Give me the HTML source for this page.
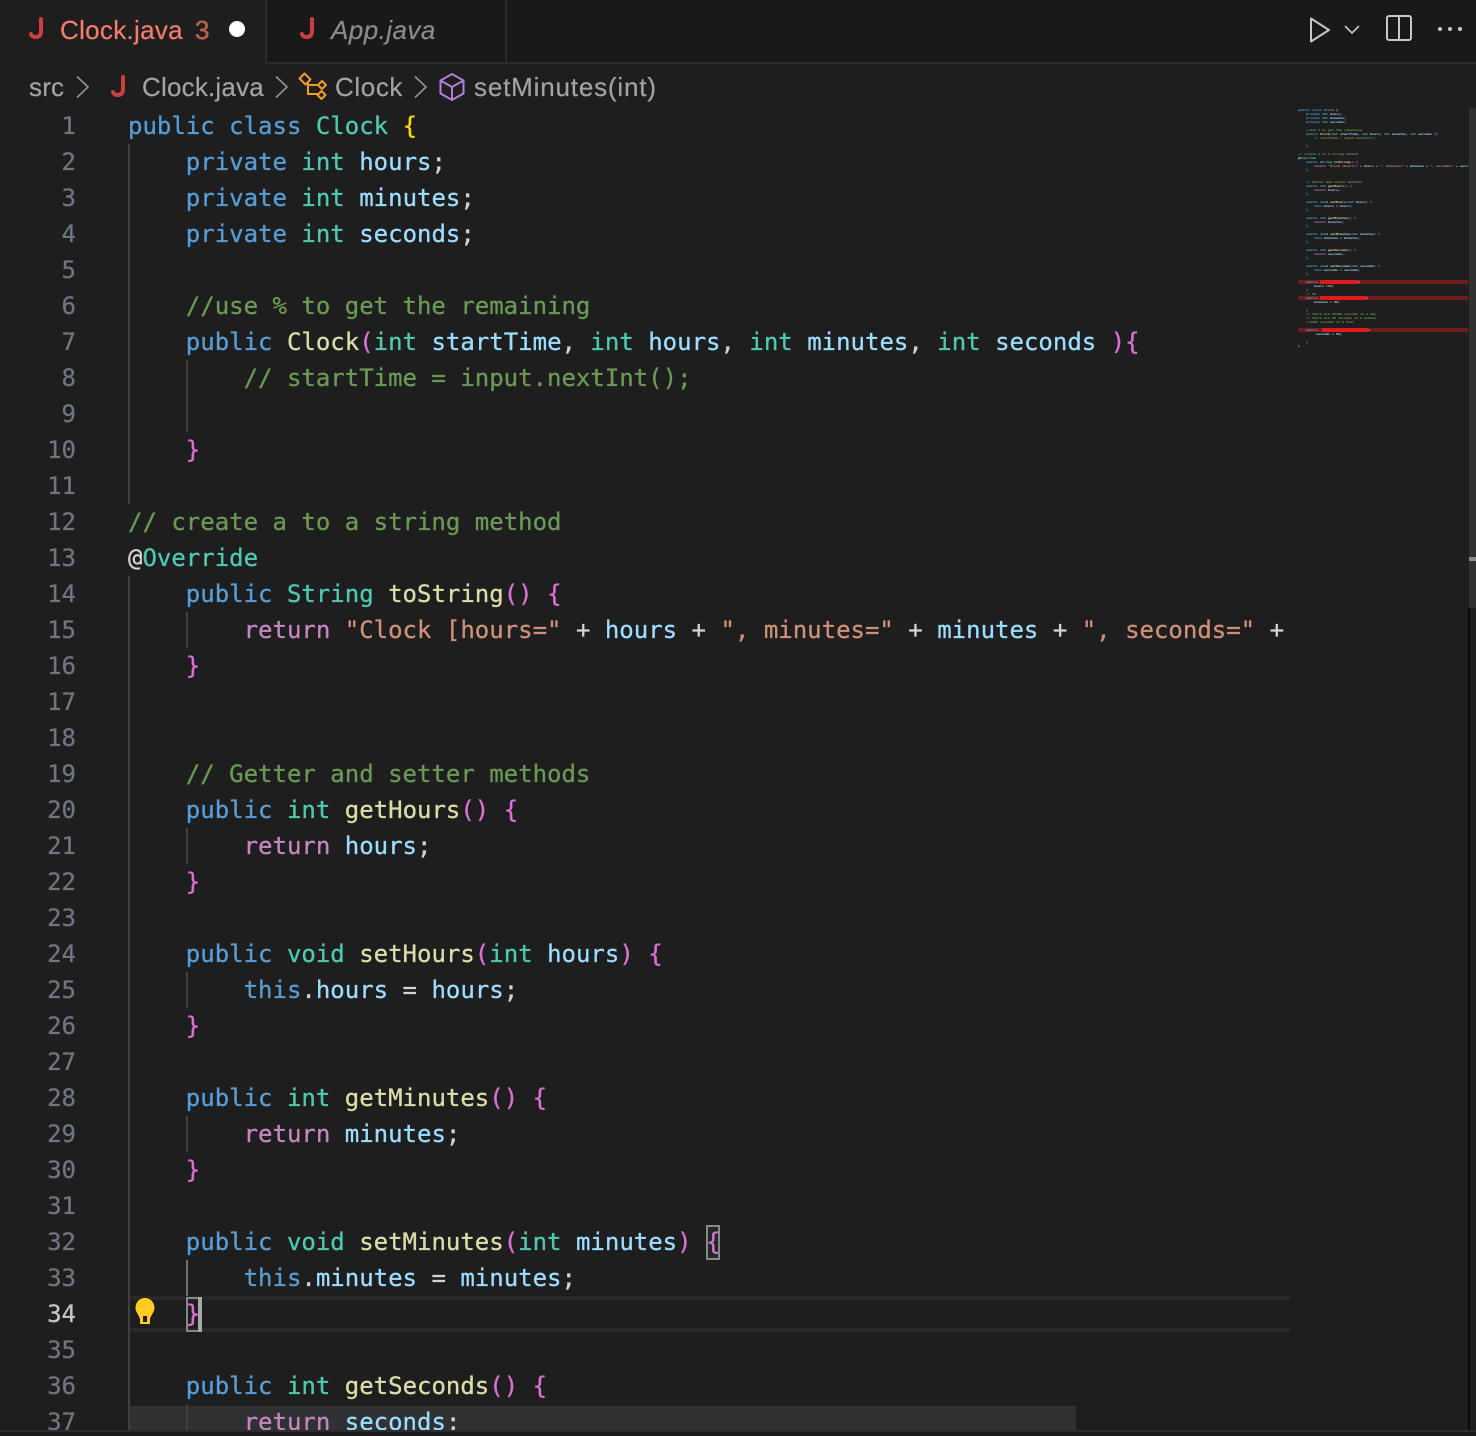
<!DOCTYPE html>
<html><head><meta charset="utf-8"><style>
html,body{margin:0;padding:0;background:#1e1e1e}
#root{position:relative;width:1476px;height:1436px;overflow:hidden;background:#1e1e1e}
.abs{position:absolute}
.ui{font-family:"Liberation Sans",sans-serif;font-size:26px;line-height:36px;white-space:nowrap;position:absolute;-webkit-text-stroke:.2px}
pre{margin:0;font-family:"DejaVu Sans Mono",monospace;font-size:24px;line-height:36px;color:#d4d4d4}
.k{color:#569cd6}.t{color:#4ec9b0}.v{color:#9cdcfe}.c{color:#6a9955}.f{color:#dcdcaa}.s{color:#ce9178}.r{color:#c586c0}.p{color:#da70d6}.y{color:#ffd700}
#nums{position:absolute;left:0;top:108px;width:76px;text-align:right;color:#6e7681;height:1322px;overflow:hidden;-webkit-text-stroke:.25px}
#nums b{font-weight:normal;color:#c6c6c6}
#code{position:absolute;left:128px;top:108px;width:1162px;height:1322px;overflow:hidden;-webkit-text-stroke:.3px}
.g{position:absolute;width:2px;background:#404040}
#mm{position:absolute;left:1298px;top:108px;width:170px;height:260px;overflow:hidden}
#mm pre{position:absolute;left:0;top:0;width:2000px;transform-origin:0 0;transform:scale(.1384,.1111);filter:blur(1px);font-weight:bold}
</style></head><body><div id="root">

<!-- tab bar -->
<div class="abs" style="left:0;top:0;width:1476px;height:62px;background:#191919"></div>
<div class="abs" style="left:0;top:62px;width:1476px;height:2px;background:#2b2b2b"></div>
<div class="abs" style="left:0;top:0;width:265px;height:64px;background:#1e1e1e"></div>
<div class="abs" style="left:265px;top:0;width:2px;height:64px;background:#2b2b2b"></div>
<div class="abs" style="left:505px;top:0;width:2px;height:62px;background:#2b2b2b"></div>
<div class="ui" style="left:60px;top:12px;color:#f47c6c;letter-spacing:.3px">Clock.java</div>
<div class="ui" style="left:195px;top:12px;color:#b9614f;-webkit-text-stroke:.5px">3</div>
<div class="ui" style="left:331px;top:12px;color:#8b8b8b;font-style:italic;letter-spacing:.45px">App.java</div>

<!-- breadcrumb -->
<div class="ui" style="left:29px;top:69px;color:#a3a3a3;letter-spacing:.2px">src</div>
<div class="ui" style="left:142px;top:69px;color:#a3a3a3;letter-spacing:.2px">Clock.java</div>
<div class="ui" style="left:335px;top:69px;color:#a3a3a3;letter-spacing:.6px">Clock</div>
<div class="ui" style="left:474px;top:69px;color:#a3a3a3;letter-spacing:.82px">setMinutes(int)</div>

<!-- line numbers -->
<pre id="nums">1
2
3
4
5
6
7
8
9
10
11
12
13
14
15
16
17
18
19
20
21
22
23
24
25
26
27
28
29
30
31
32
33
<b>34</b>
35
36
37</pre>

<!-- current line + selection highlights -->
<div class="abs" style="left:130px;top:1296px;width:1160px;height:4px;background:#282828"></div>
<div class="abs" style="left:130px;top:1328px;width:1160px;height:4px;background:#282828"></div>
<div class="abs" style="left:129px;top:1406px;width:947px;height:24px;background:#303133"></div>

<!-- indent guides -->
<div class="g" style="left:128px;top:144px;height:360px"></div>
<div class="g" style="left:128px;top:576px;height:854px"></div>
<div class="g" style="left:186px;top:360px;height:72px"></div>
<div class="g" style="left:186px;top:612px;height:36px"></div>
<div class="g" style="left:186px;top:828px;height:36px"></div>
<div class="g" style="left:186px;top:972px;height:36px"></div>
<div class="g" style="left:186px;top:1116px;height:36px"></div>
<div class="g" style="left:186px;top:1260px;height:36px;background:#707070"></div>
<div class="g" style="left:186px;top:1404px;height:26px"></div>

<!-- bracket match boxes -->
<div class="abs" style="left:706px;top:1225px;width:10px;height:31px;border:2px solid #888;background:#1e2a22"></div>
<div class="abs" style="left:186px;top:1297px;width:11px;height:31px;border:2px solid #888"></div>
<div class="abs" style="left:198px;top:1297px;width:4px;height:35px;background:#a8a8a8"></div>

<!-- code -->
<pre id="code"><span class="k">public</span> <span class="k">class</span> <span class="t">Clock</span> <span class="y">{</span>
    <span class="k">private</span> <span class="t">int</span> <span class="v">hours</span>;
    <span class="k">private</span> <span class="t">int</span> <span class="v">minutes</span>;
    <span class="k">private</span> <span class="t">int</span> <span class="v">seconds</span>;

    <span class="c">//use % to get the remaining</span>
    <span class="k">public</span> <span class="f">Clock</span><span class="p">(</span><span class="t">int</span> <span class="v">startTime</span>, <span class="t">int</span> <span class="v">hours</span>, <span class="t">int</span> <span class="v">minutes</span>, <span class="t">int</span> <span class="v">seconds</span> <span class="p">){</span>
        <span class="c">// startTime = input.nextInt();</span>

    <span class="p">}</span>

<span class="c">// create a to a string method</span>
@<span class="t">Override</span>
    <span class="k">public</span> <span class="t">String</span> <span class="f">toString</span><span class="p">()</span> <span class="p">{</span>
        <span class="r">return</span> <span class="s">"Clock [hours="</span> + <span class="v">hours</span> + <span class="s">", minutes="</span> + <span class="v">minutes</span> + <span class="s">", seconds="</span> + <span class="v">seconds</span> + <span class="s">"]"</span>;
    <span class="p">}</span>


    <span class="c">// Getter and setter methods</span>
    <span class="k">public</span> <span class="t">int</span> <span class="f">getHours</span><span class="p">()</span> <span class="p">{</span>
        <span class="r">return</span> <span class="v">hours</span>;
    <span class="p">}</span>

    <span class="k">public</span> <span class="t">void</span> <span class="f">setHours</span><span class="p">(</span><span class="t">int</span> <span class="v">hours</span><span class="p">)</span> <span class="p">{</span>
        <span class="k">this</span>.<span class="v">hours</span> = <span class="v">hours</span>;
    <span class="p">}</span>

    <span class="k">public</span> <span class="t">int</span> <span class="f">getMinutes</span><span class="p">()</span> <span class="p">{</span>
        <span class="r">return</span> <span class="v">minutes</span>;
    <span class="p">}</span>

    <span class="k">public</span> <span class="t">void</span> <span class="f">setMinutes</span><span class="p">(</span><span class="t">int</span> <span class="v">minutes</span><span class="p">)</span> <span class="p">{</span>
        <span class="k">this</span>.<span class="v">minutes</span> = <span class="v">minutes</span>;
    <span class="p">}</span>

    <span class="k">public</span> <span class="t">int</span> <span class="f">getSeconds</span><span class="p">()</span> <span class="p">{</span>
        <span class="r">return</span> <span class="v">seconds</span>;</pre>

<!-- minimap -->
<div class="abs" style="left:1298px;top:280px;width:170px;height:4px;background:#701c1c"></div>
<div class="abs" style="left:1298px;top:296px;width:170px;height:4px;background:#701c1c"></div>
<div class="abs" style="left:1298px;top:328px;width:170px;height:4px;background:#701c1c"></div>
<div id="mm"><pre><span class="k">public</span> <span class="k">class</span> <span class="t">Clock</span> <span class="y">{</span>
    <span class="k">private</span> <span class="t">int</span> <span class="v">hours</span>;
    <span class="k">private</span> <span class="t">int</span> <span class="v">minutes</span>;
    <span class="k">private</span> <span class="t">int</span> <span class="v">seconds</span>;

    <span class="c">//use % to get the remaining</span>
    <span class="k">public</span> <span class="f">Clock</span><span class="p">(</span><span class="t">int</span> <span class="v">startTime</span>, <span class="t">int</span> <span class="v">hours</span>, <span class="t">int</span> <span class="v">minutes</span>, <span class="t">int</span> <span class="v">seconds</span> <span class="p">){</span>
        <span class="c">// startTime = input.nextInt();</span>

    <span class="p">}</span>

<span class="c">// create a to a string method</span>
@<span class="t">Override</span>
    <span class="k">public</span> <span class="t">String</span> <span class="f">toString</span><span class="p">()</span> <span class="p">{</span>
        <span class="r">return</span> <span class="s">"Clock [hours="</span> + <span class="v">hours</span> + <span class="s">", minutes="</span> + <span class="v">minutes</span> + <span class="s">", seconds="</span> + <span class="v">seconds</span> + <span class="s">"]"</span>;
    <span class="p">}</span>


    <span class="c">// Getter and setter methods</span>
    <span class="k">public</span> <span class="t">int</span> <span class="f">getHours</span><span class="p">()</span> <span class="p">{</span>
        <span class="r">return</span> <span class="v">hours</span>;
    <span class="p">}</span>

    <span class="k">public</span> <span class="t">void</span> <span class="f">setHours</span><span class="p">(</span><span class="t">int</span> <span class="v">hours</span><span class="p">)</span> <span class="p">{</span>
        <span class="k">this</span>.<span class="v">hours</span> = <span class="v">hours</span>;
    <span class="p">}</span>

    <span class="k">public</span> <span class="t">int</span> <span class="f">getMinutes</span><span class="p">()</span> <span class="p">{</span>
        <span class="r">return</span> <span class="v">minutes</span>;
    <span class="p">}</span>

    <span class="k">public</span> <span class="t">void</span> <span class="f">setMinutes</span><span class="p">(</span><span class="t">int</span> <span class="v">minutes</span><span class="p">)</span> <span class="p">{</span>
        <span class="k">this</span>.<span class="v">minutes</span> = <span class="v">minutes</span>;
    <span class="p">}</span>

    <span class="k">public</span> <span class="t">int</span> <span class="f">getSeconds</span><span class="p">()</span> <span class="p">{</span>
        <span class="r">return</span> <span class="v">seconds</span>;
    <span class="p">}</span>

    <span class="k">public</span> <span class="t">void</span> <span class="f">setSeconds</span><span class="p">(</span><span class="t">int</span> <span class="v">seconds</span><span class="p">)</span> <span class="p">{</span>
        <span class="k">this</span>.<span class="v">seconds</span> = <span class="v">seconds</span>;
    <span class="p">}</span>

    <span class="k">public</span> addHours(<span class="t">int</span> <span class="v">hours</span>){
        <span class="v">hours</span> =23;
    <span class="p">}</span>
    <span class="c">// 60</span>
    <span class="k">public</span> addMinutes(<span class="t">int</span> <span class="v">minutes</span>){
        <span class="v">minutes</span> = 59;

    <span class="p">}</span>
    <span class="c">// There are 86400 seconds in a day</span>
    <span class="c">// There are 60 seconds in a minute</span>
    <span class="c">//3600 seconds in a hour</span>

    <span class="k">public</span>  addSeconds(<span class="t">int</span> <span class="v">seconds</span>){
         <span class="v">seconds</span> = 59;

    <span class="p">}</span>
<span class="y">}</span></pre></div>
<div class="abs" style="left:1320px;top:280px;width:38px;height:4px;background:#e01b1b"></div>
<div class="abs" style="left:1320px;top:296px;width:46px;height:4px;background:#e01b1b"></div>
<div class="abs" style="left:1322px;top:328px;width:46px;height:4px;background:#e01b1b"></div>

<!-- scrollbar -->
<div class="abs" style="left:1469px;top:108px;width:7px;height:500px;background:#303133"></div>
<div class="abs" style="left:1469px;top:557px;width:7px;height:4px;background:#8a8a8a"></div>
<div class="abs" style="left:1468px;top:608px;width:2px;height:822px;background:#0a0a0a"></div>

<!-- bottom strip -->
<div class="abs" style="left:0;top:1430px;width:1476px;height:2px;background:#2b2b2b"></div>
<div class="abs" style="left:0;top:1432px;width:1476px;height:4px;background:#1a1a1a"></div>

<!-- icons -->
<svg class="abs" style="left:0;top:0" width="1476" height="1436" viewBox="0 0 1476 1436" fill="none">
  <g stroke="#cc3e44" stroke-width="4" stroke-linecap="round">
    <path d="M41 19V31Q41 37 35.500 37Q32 37 31 34"/>
    <path d="M123 77V89Q123 95 117.500 95Q114 95 113 92"/>
    <path d="M312 19V31Q312 37 306.500 37Q303 37 302 34"/>
  </g>
  <circle cx="237" cy="29" r="8" fill="#fff"/>
  <g stroke="#949494" stroke-width="1.600">
    <path d="M77 76.500L88 87L77 97.500"/>
    <path d="M276 76.500L287 87L276 97.500"/>
    <path d="M415 76.500L426 87L415 97.500"/>
  </g>
  <g stroke="#ee9d28" stroke-width="2" stroke-linejoin="round">
    <path d="M299.500 78.500L304.500 73.500L310.500 79.500L305.500 84.500Z"/>
    <path d="M318 85L322 81L326 85L322 89Z"/>
    <path d="M317.500 95L321.500 91L325.500 95L321.500 99Z"/>
    <path d="M308 83V94H318M309 85H319"/>
  </g>
  <g stroke="#b180d7" stroke-width="2" stroke-linejoin="round">
    <path d="M452 74L463.500 80.500V93.500L452 100L440.500 93.500V80.500Z"/>
    <path d="M440.500 80.500L452 87L463.500 80.500M452 87V100"/>
  </g>
  <g stroke="#c8c8c8" stroke-width="2" stroke-linejoin="round" stroke-linecap="round">
    <path d="M1311 18.500L1329 30L1311 41.500Z"/>
    <path d="M1345.500 26.500L1352 33L1358.500 26.500" stroke-width="1.600"/>
    <rect x="1387" y="16" width="24" height="24" rx="2"/>
    <path d="M1399 16V40"/>
  </g>
  <g fill="#c8c8c8"><circle cx="1440" cy="29" r="2"/><circle cx="1450" cy="29" r="2"/><circle cx="1460" cy="29" r="2"/></g>
  <path fill="#ffcc22" d="M145 1298C139 1298 135.500 1303 135.500 1308C135.500 1312 139 1315 140 1319V1324H150V1319C151 1315 154.500 1312 154.500 1308C154.500 1303 151 1298 145 1298Z"/>
  <rect x="143" y="1316" width="4" height="6" fill="#1e1e1e"/>
</svg>
</div></body></html>
